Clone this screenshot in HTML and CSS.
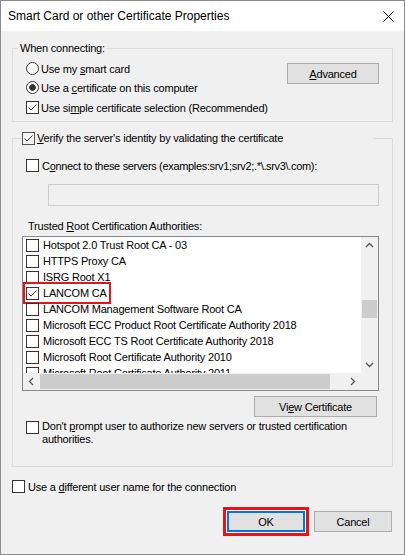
FILE: index.html
```html
<!DOCTYPE html>
<html>
<head>
<meta charset="utf-8">
<title>Smart Card or other Certificate Properties</title>
<link rel="stylesheet" href="styles.css">
</head>
<body>
<div class="window">
  <div class="titlebar">
    <span class="title">Smart Card or other Certificate Properties</span>
    <svg class="close" width="11" height="11" viewBox="0 0 11 11"><path d="M0.5 0.5 L10.5 10.5 M10.5 0.5 L0.5 10.5" stroke="#000" stroke-width="1" fill="none"/></svg>
  </div>
  <div class="content">
    <fieldset class="group">
      <legend class="legend-text">When connecting:</legend>
      <div class="connect-body">
        <div class="radio-col">
          <div class="row"><span class="radio"></span><span>Use my <u>s</u>mart card</span></div>
          <div class="row"><span class="radio checked"></span><span>Use a <u>c</u>ertificate on this computer</span></div>
        </div>
        <button class="btn btn-adv"><u>A</u>dvanced</button>
        <div class="row row-simple"><span class="cb"><svg width="11" height="11" viewBox="0 0 11 11"><path d="M1.5 5.5 L4 8 L9.5 2.5" stroke="#333" stroke-width="1" fill="none"/></svg></span><span>Use si<u>m</u>ple certificate selection (Recommended)</span></div>
      </div>
    </fieldset>

    <fieldset class="group group-verify">
      <legend class="legend-check"><span class="cb cb-soft"><svg width="11" height="11" viewBox="0 0 11 11"><path d="M1.5 5.5 L4 8 L9.5 2.5" stroke="#333" stroke-width="1" fill="none"/></svg></span><span><u>V</u>erify the server's identity by validating the certificate</span></legend>
      <div class="verify-body">
        <div class="connect-row"><span class="cb"></span><span class="tight">C<u>o</u>nnect to these servers (examples:srv1;srv2;.*\.srv3\.com):</span></div>
        <div class="server-input"></div>
        <div class="list-label">Trusted <u>R</u>oot Certification Authorities:</div>
        <div class="listbox">
          <div class="list-items">
            <div class="item"><span class="cb"></span><span>Hotspot 2.0 Trust Root CA - 03</span></div>
            <div class="item"><span class="cb"></span><span>HTTPS Proxy CA</span></div>
            <div class="item"><span class="cb"></span><span>ISRG Root X1</span></div>
            <div class="item"><span class="mark"><span class="cb"><svg width="11" height="11" viewBox="0 0 11 11"><path d="M1.5 5.5 L4 8 L9.5 2.5" stroke="#333" stroke-width="1" fill="none"/></svg></span><span>LANCOM CA</span></span></div>
            <div class="item"><span class="cb"></span><span>LANCOM Management Software Root CA</span></div>
            <div class="item"><span class="cb"></span><span>Microsoft ECC Product Root Certificate Authority 2018</span></div>
            <div class="item"><span class="cb"></span><span>Microsoft ECC TS Root Certificate Authority 2018</span></div>
            <div class="item"><span class="cb"></span><span>Microsoft Root Certificate Authority 2010</span></div>
            <div class="item"><span class="cb"></span><span>Microsoft Root Certificate Authority 2011</span></div>
          </div>
          <div class="vscroll">
            <span class="sb-btn"><svg width="17" height="17" viewBox="0 0 17 17"><path d="M5 10 L8.5 6.5 L12 10" stroke="#555" stroke-width="1.3" fill="none"/></svg></span>
            <span class="vtrack"><span class="vthumb"></span></span>
            <span class="sb-btn"><svg width="17" height="17" viewBox="0 0 17 17"><path d="M5 7 L8.5 10.5 L12 7" stroke="#555" stroke-width="1.3" fill="none"/></svg></span>
          </div>
          <div class="hscroll">
            <span class="sb-btn"><svg width="17" height="17" viewBox="0 0 17 17"><path d="M10 5 L6.5 8.5 L10 12" stroke="#555" stroke-width="1.3" fill="none"/></svg></span>
            <span class="htrack"><span class="hthumb"></span></span>
            <span class="sb-btn"><svg width="17" height="17" viewBox="0 0 17 17"><path d="M7 5 L10.5 8.5 L7 12" stroke="#555" stroke-width="1.3" fill="none"/></svg></span>
          </div>
          <div class="corner"></div>
        </div>
        <button class="btn btn-view">Vi<u>e</u>w Certificate</button>
        <div class="prompt-row"><span class="cb"></span><span class="prompt-text">Don't <u>p</u>rompt user to authorize new servers or trusted certification<br>authorities.</span></div>
      </div>
    </fieldset>

    <div class="diff-row"><span class="cb"></span><span>Use a <u>d</u>ifferent user name for the connection</span></div>

    <div class="actions">
      <button class="btn btn-ok">OK</button>
      <button class="btn btn-cancel">Cancel</button>
    </div>
  </div>
</div>
</body>
</html>
```

FILE: styles.css
```css
* { box-sizing: border-box; }
html, body { margin: 0; padding: 0; }
body {
  width: 405px;
  height: 555px;
  background: #fff;
  font-family: "Liberation Sans", Arial, sans-serif;
  font-size: 11px;
  letter-spacing: -0.2px;
  color: #000;
}
u { text-decoration: underline; text-underline-offset: 1px; }

.window {
  width: 405px;
  height: 555px;
  border: 1px solid #8a8a8a;
  background: #f0f0f0;
  display: flex;
  flex-direction: column;
}
.titlebar {
  flex: none;
  height: 30px;
  background: #fff;
  display: flex;
  align-items: center;
  justify-content: space-between;
  padding: 0 10px 0 7px;
}
.title {
  font-family: "Liberation Sans", Arial, sans-serif;
  font-size: 12px;
  letter-spacing: 0;
  color: #000;
}
.close { display: block; }

.content {
  flex: 1;
  display: flex;
  flex-direction: column;
  padding: 11px 11px 0 11px;
}

.group {
  margin: 0;
  padding: 0;
  border: 1px solid #dcdcdc;
  min-width: 0;
}
.group legend {
  padding: 0;
  height: 13px;
  line-height: 13px;
}
.legend-text { margin-left: 5px; padding: 0 2px !important; }

.connect-body {
  display: grid;
  grid-template-columns: 1fr auto;
  padding: 4px 13px 4px 13px;
}
.row {
  height: 19px;
  display: flex;
  align-items: center;
  gap: 2px;
  white-space: nowrap;
}
.row-simple { grid-column: 1 / -1; margin-top: 1px; }
.radio {
  flex: none;
  width: 13px;
  height: 13px;
  border: 1px solid #333;
  border-radius: 50%;
  background: #fff;
}
.radio.checked { background: radial-gradient(circle, #333 0, #333 3px, #fff 3.6px); }

.cb {
  flex: none;
  width: 13px;
  height: 13px;
  border: 1px solid #333;
  background: #fff;
  display: inline-flex;
}
.cb svg { display: block; }
.cb-soft { border-color: #555; background: #f4f4f4; }

.btn {
  font-family: "Liberation Sans", Arial, sans-serif;
  font-size: 11px;
  letter-spacing: -0.2px;
  color: #000;
  background: #e1e1e1;
  border: 1px solid #adadad;
  height: 21px;
  padding: 0;
  margin: 0;
  border-radius: 0;
}
.btn-adv { width: 92px; align-self: start; margin-top: 4px; }

.group-verify { margin-top: 10px; }
.legend-check {
  margin-left: 9px;
  width: 351px;
  display: flex;
  align-items: center;
  gap: 2px;
  white-space: nowrap;
}
.verify-body {
  display: flex;
  flex-direction: column;
  padding: 0 13px 20px 9px;
}
.connect-row {
  margin-top: 14px;
  margin-left: 4px;
  height: 13px;
  display: flex;
  align-items: center;
  gap: 3px;
  white-space: nowrap;
}
.tight { letter-spacing: -0.33px; }
.server-input {
  margin-top: 12px;
  margin-left: 26px;
  height: 22px;
  border: 1px solid #cccccc;
  background: #f0f0f0;
}
.list-label {
  margin-top: 14px;
  margin-left: 6px;
  height: 13px;
  line-height: 13px;
}
.listbox {
  margin-top: 3px;
  height: 155px;
  border: 1px solid #828790;
  display: grid;
  grid-template-columns: 1fr 17px;
  grid-template-rows: 1fr 17px;
  background: #f0f0f0;
}
.list-items {
  background: #fff;
  overflow: hidden;
  min-width: 0;
  min-height: 0;
}
.item {
  height: 16px;
  display: flex;
  align-items: center;
  gap: 4px;
  padding-left: 3px;
  white-space: nowrap;
}
.mark {
  display: flex;
  align-items: center;
  gap: 4px;
  height: 16px;
  padding-right: 1px;
  outline: 2px solid #e3141c;
  outline-offset: 1px;
}
.vscroll {
  display: flex;
  flex-direction: column;
  background: #f0f0f0;
}
.sb-btn {
  flex: none;
  width: 17px;
  height: 17px;
  display: flex;
  align-items: center;
  justify-content: center;
}
.sb-btn svg { display: block; }
.vtrack { flex: 1; display: flex; flex-direction: column; align-items: center; }
.vthumb { margin-top: 46px; width: 15px; height: 18px; background: #cdcdcd; }
.hscroll {
  display: flex;
  background: #f0f0f0;
  min-width: 0;
}
.htrack { flex: 1; display: flex; align-items: center; }
.hthumb { width: 290px; height: 15px; background: #cdcdcd; }
.corner { background: #f0f0f0; }

.btn-view {
  margin-top: 5px;
  align-self: flex-end;
  margin-right: 2px;
  width: 123px;
}
.prompt-row {
  margin-top: 3px;
  margin-left: 4px;
  display: flex;
  align-items: flex-start;
  gap: 3px;
  line-height: 13px;
}
.prompt-row .cb { margin-top: 1px; }

.diff-row {
  margin-top: 13px;
  height: 13px;
  display: flex;
  align-items: center;
  gap: 3px;
  white-space: nowrap;
}

.actions {
  margin-top: 18px;
  display: flex;
  justify-content: flex-end;
  gap: 9px;
  padding-right: 1px;
}
.btn-ok, .btn-cancel { width: 78px; }
.btn-ok {
  border-color: #0078d7;
  box-shadow: inset 0 0 0 1px #0078d7, 0 0 0 1px #f8f8f8, 0 0 0 4px #e3141c;
}
```
